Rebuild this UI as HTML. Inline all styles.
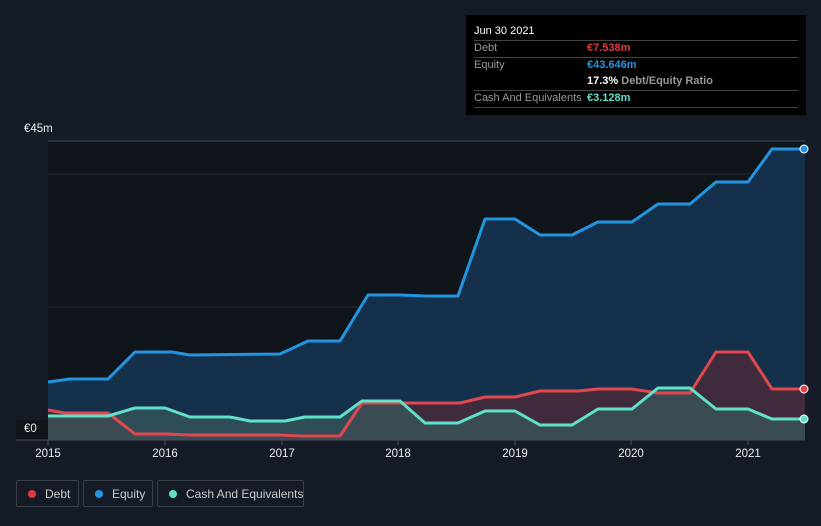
<!DOCTYPE html><html><head><style>
html,body{margin:0;width:821px;height:526px;overflow:hidden}
body{background:#151b26;font-family:"Liberation Sans",sans-serif;position:relative}
.tt{position:absolute;left:466px;top:15px;width:340px;height:100px;background:#000;}
.r{position:absolute;left:8px;font-size:11px;color:#999;white-space:nowrap}
.v{position:absolute;left:121px;font-size:11px;font-weight:bold;white-space:nowrap}
.ln{position:absolute;left:8px;width:324px;height:1px;background:#444}
.lg{position:absolute;top:480px;height:27px;border:1px solid #3a3f48;border-radius:2px;color:#ccc;font-size:12px;line-height:26px;box-sizing:border-box;white-space:nowrap}
.lg i{position:absolute;left:11px;top:9px;width:8px;height:8px;border-radius:50%}
.lg span{position:absolute;left:28px}
</style></head><body>
<svg width="821" height="526" style="position:absolute;left:0;top:0">
<rect x="48" y="141" width="757" height="299" fill="#10141b"/>
<line x1="48" y1="141" x2="805" y2="141" stroke="#4a4e56"/>
<line x1="48" y1="174" x2="805" y2="174" stroke="#242832"/>
<line x1="48" y1="307" x2="805" y2="307" stroke="#242832"/>
<path d="M48,382 L70,379 L108,379 L135,352 L172,352 L190,355 L280,354 L308,341 L340,341 L368,295 L400,295 L425,296 L458,296 L485,219 L515,219 L540,235 L572,235 L598,222 L632,222 L658,204 L690,204 L716,182 L748,182 L772,149 L805,149 L805,440 L48,440Z" fill="#15304a"/>
<path d="M48,410 L65,413 L108,413 L135,434 L165,434 L190,435 L280,435 L300,436 L340,436 L362,403 L400,403 L460,403 L485,397 L515,397 L540,391 L578,391 L598,389 L632,389 L658,393 L690,393 L716,352 L748,352 L772,389 L805,389 L805,440 L48,440Z" fill="#4a2a38" opacity="0.8"/>
<path d="M48,416 L108,416 L135,408 L165,408 L190,417 L230,417 L250,421 L285,421 L305,417 L340,417 L362,401 L400,401 L425,423 L458,423 L485,411 L515,411 L540,425 L572,425 L598,409 L632,409 L658,388 L690,388 L716,409 L748,409 L772,419 L805,419 L805,440 L48,440Z" fill="#3a5a5c" opacity="0.7"/>
<path d="M48,382 L70,379 L108,379 L135,352 L172,352 L190,355 L280,354 L308,341 L340,341 L368,295 L400,295 L425,296 L458,296 L485,219 L515,219 L540,235 L572,235 L598,222 L632,222 L658,204 L690,204 L716,182 L748,182 L772,149 L805,149" fill="none" stroke="#2394df" stroke-width="3" stroke-linejoin="round"/>
<path d="M48,410 L65,413 L108,413 L135,434 L165,434 L190,435 L280,435 L300,436 L340,436 L362,403 L400,403 L460,403 L485,397 L515,397 L540,391 L578,391 L598,389 L632,389 L658,393 L690,393 L716,352 L748,352 L772,389 L805,389" fill="none" stroke="#e0474f" stroke-width="3" stroke-linejoin="round"/>
<path d="M48,416 L108,416 L135,408 L165,408 L190,417 L230,417 L250,421 L285,421 L305,417 L340,417 L362,401 L400,401 L425,423 L458,423 L485,411 L515,411 L540,425 L572,425 L598,409 L632,409 L658,388 L690,388 L716,409 L748,409 L772,419 L805,419" fill="none" stroke="#5ee0cb" stroke-width="3" stroke-linejoin="round"/>
<rect x="805" y="130" width="16" height="320" fill="#151b26"/>
<circle cx="804" cy="149" r="4" fill="#2394df" stroke="#fff" stroke-width="1"/>
<circle cx="804" cy="389" r="4" fill="#e0474f" stroke="#fff" stroke-width="1"/>
<circle cx="804" cy="419" r="4" fill="#5ee0cb" stroke="#fff" stroke-width="1"/>
<rect x="16" y="420" width="32" height="20" fill="#10141b"/>
<line x1="16" y1="440" x2="805" y2="440" stroke="#4a4e56"/>
<g stroke="#4a4e56"><line x1="48" y1="440" x2="48" y2="445"/><line x1="165" y1="440" x2="165" y2="445"/><line x1="282" y1="440" x2="282" y2="445"/><line x1="398" y1="440" x2="398" y2="445"/><line x1="515" y1="440" x2="515" y2="445"/><line x1="631" y1="440" x2="631" y2="445"/><line x1="748" y1="440" x2="748" y2="445"/></g>
<g fill="#eee" font-size="11.5" text-anchor="middle" font-family="Liberation Sans"><text x="48" y="457">2015</text><text x="165" y="457">2016</text><text x="282" y="457">2017</text><text x="398" y="457">2018</text><text x="515" y="457">2019</text><text x="631" y="457">2020</text><text x="748" y="457">2021</text></g>
<text x="24" y="132" fill="#eee" font-size="11.5" font-family="Liberation Sans">€45m</text>
<text x="24" y="432" fill="#eee" font-size="11.5" font-family="Liberation Sans">€0</text>
</svg>
<div class="tt">
<div class="r" style="top:10px;color:#fff">Jun 30 2021</div>
<div class="ln" style="top:25px"></div>
<div class="r" style="top:27px">Debt</div><div class="v" style="top:27px;color:#e0393f">€7.538m</div>
<div class="ln" style="top:42px"></div>
<div class="r" style="top:44px">Equity</div><div class="v" style="top:44px;color:#2394df">€43.646m</div>
<div class="v" style="top:60px;color:#fff">17.3% <span style="color:#999">Debt/Equity Ratio</span></div>
<div class="ln" style="top:75px"></div>
<div class="r" style="top:77px">Cash And Equivalents</div><div class="v" style="top:77px;color:#5ee0cb">€3.128m</div>
<div class="ln" style="top:92px"></div>
</div>
<div class="lg" style="left:16px;width:63px"><i style="background:#e0393f"></i><span>Debt</span></div>
<div class="lg" style="left:83px;width:70px"><i style="background:#2394df"></i><span>Equity</span></div>
<div class="lg" style="left:157px;width:147px"><i style="background:#5ee0cb"></i><span>Cash And Equivalents</span></div>
</body></html>
